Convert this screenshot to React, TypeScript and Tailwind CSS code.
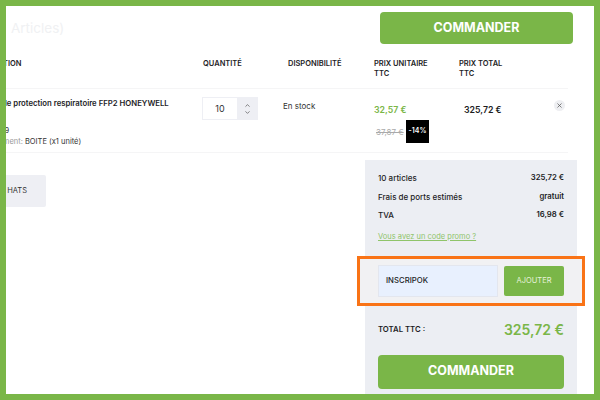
import { ChevronDown, ChevronUp, X } from "lucide-react";

const headCell = "text-[7.5px] leading-[10px] font-semibold text-[#1d1d1f]";

const SummaryRow = ({ label, value }: { label: string; value: string }) => (
  <div className="flex items-center justify-between h-[18.5px] text-[8px] font-medium text-[#1d1d1f]">
    <span>{label}</span>
    <span className="font-semibold text-[7.75px]">{value}</span>
  </div>
);

const App = () => {
  return (
    <div className="w-[600px] h-[400px] border-[6px] border-[#7ab648] bg-white overflow-hidden font-['Inter',sans-serif]">
      <div className="flex items-start justify-between h-[44px] pt-[6px] pr-[21px] pl-[5px]">
        <span className="text-[13.5px] leading-[32px] text-[#f0f1f3]">Articles)</span>
        <button className="w-[193px] h-[32px] rounded-[4px] bg-[#7ab648] text-white text-[12.5px] font-bold">
          COMMANDER
        </button>
      </div>

      <div className="mr-[26px] overflow-hidden">
        <div className="grid grid-cols-[196px_86px_86px_86px_1fr] h-[39px] items-start pt-[9px] border-b border-[#f5f5f6]">
          <div className="overflow-hidden">
            <div className={`${headCell} ml-[-36px]`}>DESIGNATION</div>
          </div>
          <div className={`${headCell} pl-[1px]`}>QUANTITÉ</div>
          <div className={headCell}>DISPONIBILITÉ</div>
          <div className={headCell}>
            PRIX UNITAIRE
            <br />
            TTC
          </div>
          <div className={`${headCell} ml-[-1px]`}>
            PRIX TOTAL
            <br />
            TTC
          </div>
        </div>

        <div className="grid grid-cols-[196px_86px_86px_86px_1fr] h-[64px] border-b border-[#f5f5f6]">
          <div className="overflow-hidden pt-[9px]">
            <div className="ml-[-36px] w-[260px] text-[7.75px] leading-[10px] font-semibold text-[#1d1d1f]">
              Masque de protection respiratoire FFP2 HONEYWELL
            </div>
            <div className="ml-[-30px] mt-[17px] text-[7.5px] leading-[11px] text-[#333]">Réf: 1039</div>
            <div className="ml-[-46px] w-[240px] text-[7.5px] leading-[11px] text-[#999]">
              Conditionnement: <span className="text-[#333]">BOITE (x1 unité)</span>
            </div>
          </div>

          <div className="pt-[8px]">
            <div className="flex w-[56px] h-[23px] bg-[#eeeff4] p-[1px]">
              <div className="w-[34px] flex items-center justify-center bg-white text-[9px] text-[#333]">10</div>
              <div className="flex-1 flex flex-col items-center justify-center text-[#333]">
                <ChevronUp size={7} />
                <ChevronDown size={7} />
              </div>
            </div>
          </div>

          <div className="pt-[11px] text-[8px] leading-[12px] text-[#333] ml-[-5px]">En stock</div>

          <div className="pt-[15px]">
            <div className="text-[8.75px] leading-[12px] font-semibold text-[#7ab648]">32,57 €</div>
            <div className="flex items-center mt-[4px]">
              <span className="ml-[2px] w-[30px] text-[8px] text-[#aaa] line-through">37,87 €</span>
              <span className="w-[23px] h-[23px] flex items-center justify-center bg-black text-white text-[7px] font-semibold">
                -14%
              </span>
            </div>
          </div>

          <div className="flex justify-between pr-[3px]">
            <div className="pl-[4px] pt-[15px] text-[8.75px] leading-[12px] font-semibold text-[#1d1d1f]">325,72 €</div>
            <div className="mt-[11px] w-[11px] h-[11px] rounded-full bg-[#eeeff2] flex items-center justify-center text-[#555]">
              <X size={7} strokeWidth={2.5} />
            </div>
          </div>
        </div>
      </div>

      <div className="flex justify-between items-start mt-[7px]">
        <div className="mt-[15px] w-[40px] h-[32px] rounded-r-[2px] bg-[#eeeff4] overflow-hidden flex items-center justify-end pr-[20px] text-[7.5px] text-[#333] whitespace-nowrap">
          <span className="mr-[-1px]">HATS</span>
        </div>

        <div className="w-[212px] mr-[17px] h-[234px] bg-[#eceef3] px-[13px] pt-[8.75px] shrink-0">
          <SummaryRow label="10 articles" value="325,72 €" />
          <SummaryRow label="Frais de ports estimés" value="gratuit" />
          <SummaryRow label="TVA" value="16,98 €" />
          <div className="mt-[6.25px] text-[7.5px] leading-[12px] text-[#8fc46a] underline">Vous avez un code promo ?</div>

          <div className="flex items-center gap-[6px] -mx-[21px] mt-[13px] h-[50px] border-[3px] border-[#f97316] bg-[#f1f1f3] pl-[18px]">
            <div className="w-[120px] h-[32px] flex items-center pl-[7px] bg-[#e8f0fe] border border-[#e3e6ee] text-[7.75px] font-medium text-[#1d1d1f]">
              INSCRIPOK
            </div>
            <button className="w-[60px] h-[30px] rounded-[2px] bg-[#7ab648] text-[#e6f2da] text-[7.5px]">
              AJOUTER
            </button>
          </div>

          <div className="flex items-center justify-between mt-[13px] h-[22px]">
            <span className="text-[7.75px] font-semibold text-[#1d1d1f]">TOTAL TTC :</span>
            <span className="text-[14px] font-semibold text-[#7ab648]">325,72 €</span>
          </div>

          <button className="mt-[14px] w-full h-[34px] rounded-[4px] bg-[#7ab648] text-white text-[12.5px] font-bold">
            COMMANDER
          </button>
        </div>
      </div>
    </div>
  );
};

export default App;
